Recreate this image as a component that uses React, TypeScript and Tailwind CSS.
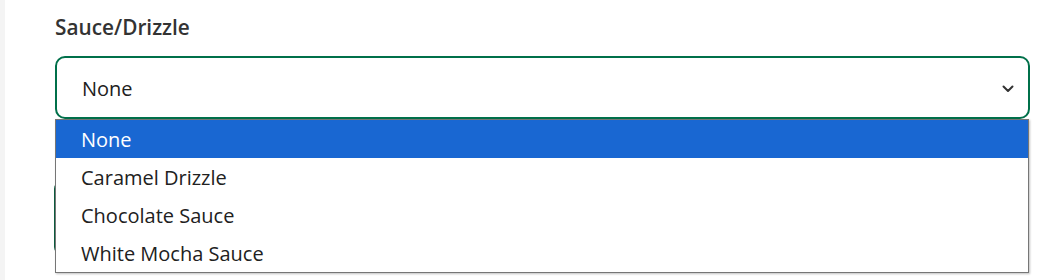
import React from "react";

export default function App() {
  const options = ["None", "Caramel Drizzle", "Chocolate Sauce", "White Mocha Sauce"];
  return (
    <div className="w-[1058px] h-[280px] bg-white overflow-hidden flex" style={{ fontFamily: '"Open Sans", "Noto Sans", sans-serif' }}>
      <div className="w-[5px] h-full bg-[#f4f4f4] shrink-0" />
      <div className="pl-[50px] pt-[13px] w-[1025px] shrink-0 relative">
        <div className="text-[20.8px] leading-[28px] font-semibold text-[#333333]">Sauce/Drizzle</div>
        <div className="mt-[15px] h-[63px] w-[975px] border-2 border-[#00704a] rounded-[10px] flex items-center justify-between pl-[25px] pr-[14px] pt-[2px] text-[20px] text-[#212121]">
          <span>None</span>
          <svg width="12" height="8" viewBox="0 0 12 8" fill="none">
            <path d="M1.5 1.5 L6 6 L10.5 1.5" stroke="#333" strokeWidth="2" strokeLinecap="round" strokeLinejoin="round" />
          </svg>
        </div>
        <div className="mt-[62px] h-[74px] w-[975px] ml-[-1px] border-2 border-[#0b5d3e] rounded-[8px]" />
        <div className="absolute left-[50px] top-[119px] w-[974px] border border-[#767676] bg-white shadow-[1px_1px_2px_rgba(0,0,0,0.25)]">
          {options.map((o, i) => (
            <div
              key={o}
              className={
                "h-[38px] flex items-center pl-[25px] pt-[2px] text-[20px] " +
                (i === 0 ? "bg-[#1967d2] text-white" : "text-[#212121]")
              }
            >
              {o}
            </div>
          ))}
        </div>
      </div>
    </div>
  );
}
